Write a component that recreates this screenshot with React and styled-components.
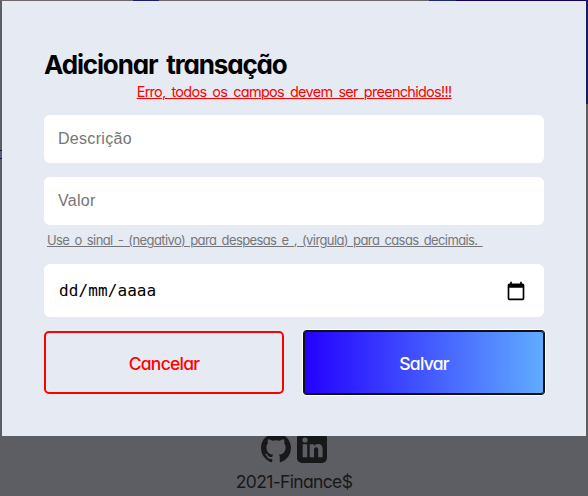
import React from "react";
import styled, { createGlobalStyle } from "styled-components";
import { BsGithub } from "react-icons/bs";

const GlobalStyle = createGlobalStyle`
  * { box-sizing: border-box; }
  body { margin: 0; overflow: hidden; background: #5d5e63; }
  button, input { font: inherit; }
`;

const Page = styled.div`
  position: relative;
  width: 588px;
  height: 496px;
  overflow: hidden;
  padding-top: 433px;
  font-family: Inter, "Open Sans", sans-serif;
  font-feature-settings: "cv11" 1;
  background:
    linear-gradient(#1c1c64, #1c1c64) 586px 0 / 2px 104px no-repeat,
    linear-gradient(#1c1c70, #1c1c70) 133px 0 / 26px 1px no-repeat,
    linear-gradient(#20286a, #20286a) 429px 0 / 27px 1px no-repeat,
    linear-gradient(#150060, #150060) 456px 0 / 132px 1px no-repeat,
    linear-gradient(#6a666a, #6a666a) 0 0 / 588px 1px no-repeat,
    linear-gradient(#15156c, #15156c) 0 150px / 2px 1px no-repeat,
    linear-gradient(#15156c, #15156c) 0 158px / 2px 1px no-repeat,
    linear-gradient(#605a63, #605a63) 0 495px / 588px 1px no-repeat,
    #5d5e63;
`;

const Footer = styled.footer`
  display: flex;
  flex-direction: column;
  align-items: center;
  color: #17181a;
`;

const Socials = styled.div`
  display: flex;
  gap: 6px;
  height: 30px;
`;

const Copyright = styled.div`
  margin-top: 7px;
  font-size: 17.5px;
  line-height: 24px;
  letter-spacing: -0.65px;
  white-space: nowrap;
`;

const Modal = styled.section`
  position: absolute;
  left: 2px;
  top: 1px;
  width: 584px;
  height: 435px;
  padding: 47px 42px 0;
  background: #e6ebf3;
`;

const Title = styled.h2`
  margin: 0;
  font-size: 26px;
  font-weight: 700;
  line-height: 34px;
  letter-spacing: -1.15px;
  word-spacing: 4px;
  white-space: nowrap;
  color: #000;
`;

const ErrorText = styled.p`
  margin: 0;
  height: 33px;
  text-align: center;
  font-size: 14.5px;
  line-height: 20px;
  letter-spacing: -0.72px;
  word-spacing: 2.6px;
  white-space: nowrap;
  color: #f00;
  text-decoration: underline;
  text-decoration-thickness: 1px;
  text-underline-offset: 1px;
`;

const Field = styled.input`
  display: block;
  width: 500px;
  height: 48px;
  margin-bottom: ${(p) => p.$gap}px;
  padding: 0 14px;
  border: 0;
  border-radius: 6px;
  outline: none;
  background: #fff;
  font-family: "Liberation Sans", Arial, sans-serif;
  font-size: 16px;
  letter-spacing: 0.3px;
  &::placeholder { color: #757575; opacity: 1; }
`;

const Hint = styled.small`
  display: block;
  height: 33px;
  padding-left: 3px;
  font-size: 13px;
  line-height: 19px;
  letter-spacing: -0.6px;
  word-spacing: 2.1px;
  white-space: pre;
  color: #76777c;
  text-decoration: underline;
  text-decoration-thickness: 1px;
  text-underline-offset: 1px;
`;

const DateField = styled.div`
  display: flex;
  align-items: center;
  justify-content: space-between;
  height: 53px;
  padding: 0 18px 0 15px;
  border-radius: 6px;
  background: #fff;
  color: #000;
  font-family: "DejaVu Sans Mono", monospace;
  font-size: 16px;
`;

const DateText = styled.span`
  letter-spacing: 0.1px;
`;

const Actions = styled.div`
  display: flex;
  justify-content: space-between;
  margin-top: 14px;
`;

const Button = styled.button`
  width: 240px;
  height: 63px;
  padding: 1px 0 0;
  border-radius: 5px;
  font-size: 17.5px;
  font-weight: 500;
  letter-spacing: -0.75px;
`;

const CancelButton = styled(Button)`
  border: 2px solid #f00;
  background: transparent;
  color: #f00;
`;

const SaveButton = styled(Button)`
  border: 0;
  border-radius: 3px;
  background: linear-gradient(90deg, #2400ff, #60adff);
  color: #fff;
  box-shadow: inset 0 0 0 1px #101010, 0 0 0 1px #101010, 0 0 0 2px #fff;
`;

const CalendarIcon = () => (
  <svg width="20" height="20" viewBox="0 0 24 24" fill="#000">
    <path d="M20 3h-1V1h-2v2H7V1H5v2H4c-1.1 0-2 .9-2 2v16c0 1.1.9 2 2 2h16c1.1 0 2-.9 2-2V5c0-1.1-.9-2-2-2zm0 18H4V8h16v13z" />
  </svg>
);

const LinkedinIcon = () => (
  <svg width="30" height="30" viewBox="0 0 30 30">
    <rect width="30" height="30" rx="5" fill="#17181a" />
    <g fill="#5d5e63">
      <circle cx="8" cy="7" r="2.6" />
      <path d="M5.7 11.3h4.5v13H5.7zM12.7 11.3H17v1.8c.8-1.3 2.3-2.1 4.1-2.1 3.6 0 4.5 2.5 4.5 5.8v7.5h-4.4v-6.7c0-1.7-.2-3.3-2-3.3-1.9 0-2.2 1.6-2.2 3.3v6.7h-4.3z" />
    </g>
  </svg>
);

export default function App() {
  return (
    <>
      <GlobalStyle />
      <Page>
        <Footer>
          <Socials>
            <BsGithub size={30} />
            <LinkedinIcon />
          </Socials>
          <Copyright>2021-Finance$</Copyright>
        </Footer>
        <Modal>
          <Title>Adicionar transação</Title>
          <ErrorText>Erro, todos os campos devem ser preenchidos!!!</ErrorText>
          <Field $gap={14} placeholder="Descrição" />
          <Field $gap={6} placeholder="Valor" />
          <Hint>Use o sinal - (negativo) para despesas e , (virgula) para casas decimais. </Hint>
          <DateField>
            <DateText>dd/mm/aaaa</DateText>
            <CalendarIcon />
          </DateField>
          <Actions>
            <CancelButton>Cancelar</CancelButton>
            <SaveButton>Salvar</SaveButton>
          </Actions>
        </Modal>
      </Page>
    </>
  );
}
